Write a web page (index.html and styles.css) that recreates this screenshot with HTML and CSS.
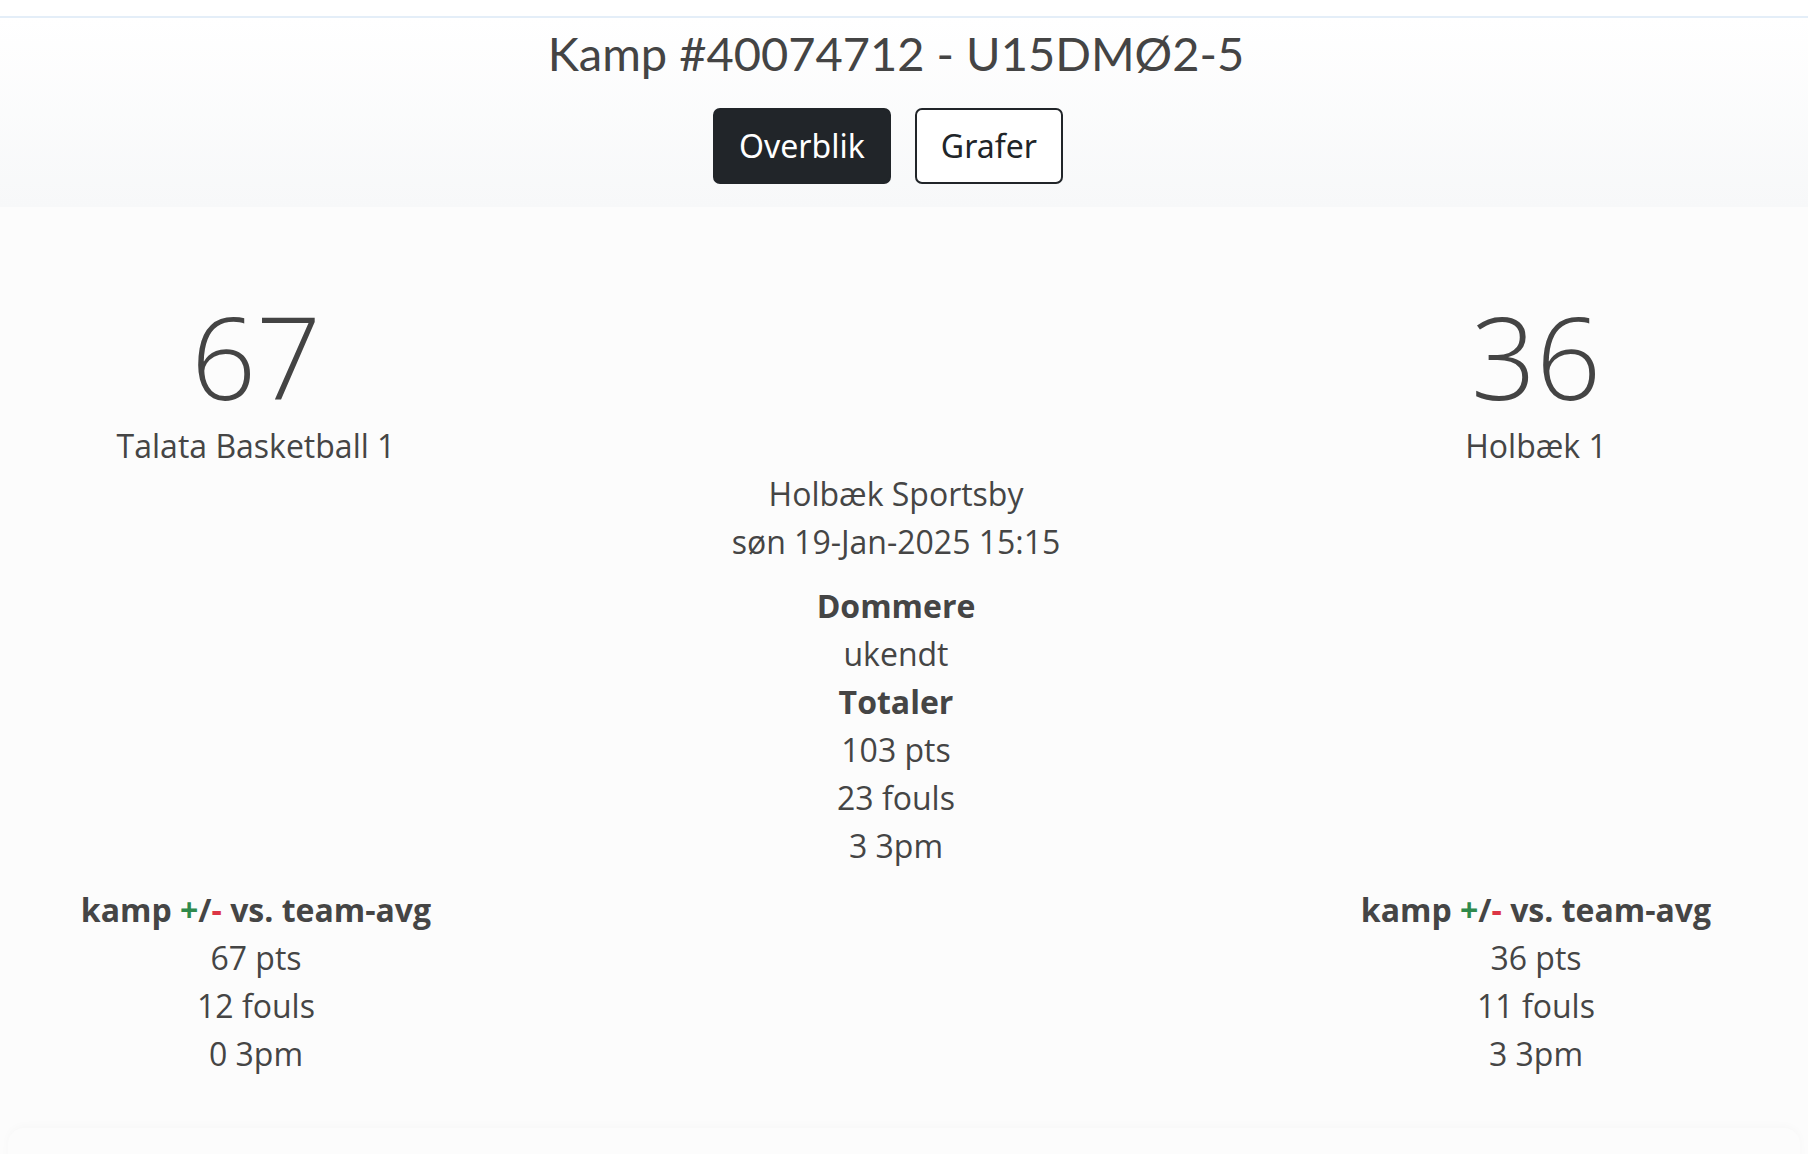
FILE: index.html
```html
<!DOCTYPE html>
<html>
<head>
    <title>Kamp #40074712 - U15DMØ2-5</title>
    <link rel="stylesheet" href="styles.css">
</head>
<body>
    <div class="topbar"></div>

    <header class="match-header">
        <h1 class="match-title">Kamp #40074712 - U15DMØ2-5</h1>
        <div class="view-switch">
            <button class="btn btn-dark">Overblik</button>
            <button class="btn btn-outline">Grafer</button>
        </div>
    </header>

    <main class="match">
        <!-- Teams and score -->
        <div class="team team-home">
            <div class="score">67</div>
            <div class="team-name">Talata Basketball 1</div>
        </div>
        <div class="team team-away">
            <div class="score">36</div>
            <div class="team-name">Holbæk 1</div>
        </div>

        <!-- Match info -->
        <div class="match-info">
            <p class="venue">Holbæk Sportsby<br>søn 19-Jan-2025 15:15</p>
            <div class="info-label">Dommere</div>
            <div>ukendt</div>
            <div class="info-label">Totaler</div>
            <div>103 pts</div>
            <div>23 fouls</div>
            <div>3 3pm</div>
        </div>

        <!-- Per team stats -->
        <div class="team-stats team-home">
            <div class="info-label">kamp <span class="plus">+</span>/<span class="minus">-</span> vs. team-avg</div>
            <div>67 pts</div>
            <div>12 fouls</div>
            <div>0 3pm</div>
        </div>
        <div class="team-stats team-away">
            <div class="info-label">kamp <span class="plus">+</span>/<span class="minus">-</span> vs. team-avg</div>
            <div>36 pts</div>
            <div>11 fouls</div>
            <div>3 3pm</div>
        </div>
    </main>

    <div class="page-end"></div>
</body>
</html>
```

FILE: styles.css
```css
body {
    margin: 0;
    font-family: 'Open Sans', 'Noto Sans', sans-serif;
    font-size: 32px;
    line-height: 48px;
    color: #454545;
    background-color: #fcfcfc;
}
.topbar {
    height: 16px;
    background: #fff;
    border-bottom: 2px solid #e4eef8;
}
.match-header {
    padding: 7px 16px 23px 0;
    text-align: center;
    background: linear-gradient(#fff, #f7f8f9);
}
.match-title {
    margin: 0;
    font-family: Lato, 'Open Sans', sans-serif;
    font-weight: 400;
    font-size: 47px;
    line-height: 56px;
    color: #444;
}
.view-switch {
    display: flex;
    justify-content: center;
    gap: 24px;
    margin-top: 27px;
}
.btn {
    font-family: 'Noto Sans', 'Open Sans', sans-serif;
    font-size: 32px;
    line-height: 48px;
    padding: 12px 24px;
    border: 2px solid #212529;
    border-radius: 7px;
    cursor: pointer;
}
.btn:last-child {
    margin-right: 16px;
}
.btn-dark {
    background-color: #212529;
    color: #fff;
}
.btn-outline {
    background-color: #fff;
    color: #212529;
}
.match {
    display: grid;
    grid-template-columns: 2fr 3fr 2fr;
    padding: 83px 16px 0 0;
    text-align: center;
}
.team-home {
    grid-column: 1;
}
.team-away {
    grid-column: 3;
}
.team {
    grid-row: 1;
}
.score {
    font-size: 114px;
    font-weight: 300;
    line-height: 132px;
    color: #444;
}
.match-info {
    grid-column: 2;
    grid-row: 2;
    margin-bottom: 16px;
}
.venue {
    margin: 0 0 16px 0;
}
.info-label {
    font-weight: 700;
}
.team-stats {
    grid-row: 3;
}
.plus {
    color: #2f8a4c;
}
.minus {
    color: #dc3545;
}
.page-end {
    height: 60px;
    margin: 50px 8px 0;
    border-radius: 16px;
    background: #fcfcfc;
    box-shadow: 0 -2px 10px rgba(0,0,0,0.025);
}
```
